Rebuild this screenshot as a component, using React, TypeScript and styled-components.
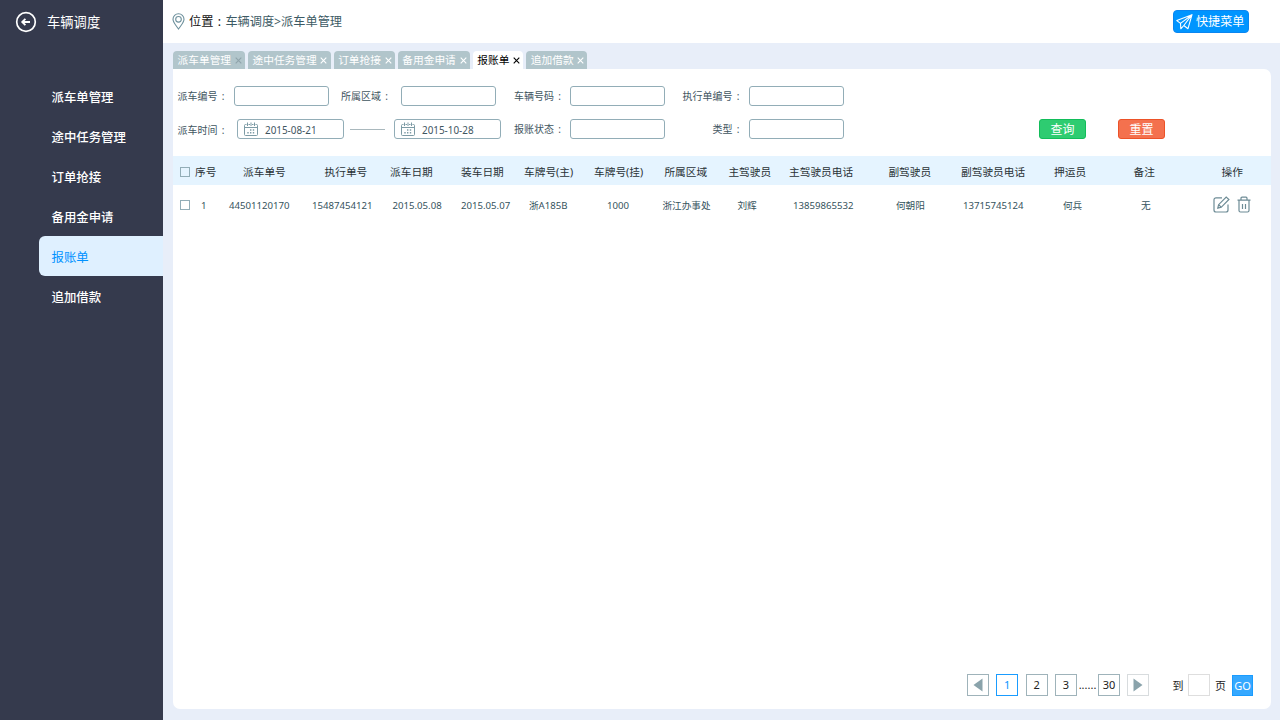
import React, { useState } from 'react';
import styled, { createGlobalStyle } from 'styled-components';

const GlobalStyle = createGlobalStyle`
  * {
    box-sizing: border-box;
  }

  body {
    margin: 0;
    overflow: hidden;
    font-family: "Noto Sans", "Noto Sans CJK SC", sans-serif;
  }

  button, input {
    font-family: inherit;
  }
`;

const Page = styled.div`
  display: flex;
  width: 1280px;
  height: 720px;
  background: #e8eef9;
`;

/* Sidebar */

const Sidebar = styled.aside`
  display: flex;
  flex-direction: column;
  flex: none;
  width: 163px;
  background: #353a4d;
`;

const SidebarHeader = styled.div`
  display: flex;
  align-items: center;
  gap: 10px;
  height: 44px;
  padding-left: 15px;
  color: #fff;
  font-size: 13.3px;
  line-height: 19px;
`;

const Menu = styled.ul`
  margin: 32px 0 0;
  padding: 0 0 0 39px;
  list-style: none;
`;

const MenuItem = styled.li<{ $active: boolean }>`
  height: 40px;
  padding: 1px 0 0 12.5px;
  border-radius: 6px 0 0 6px;
  background: ${({ $active }) => ($active ? '#dff0ff' : 'transparent')};
  color: ${({ $active }) => ($active ? '#0092ff' : '#fff')};
  font-size: 12.4px;
  font-weight: ${({ $active }) => ($active ? 400 : 500)};
  line-height: 41px;
  cursor: pointer;
`;

/* Top bar */

const Main = styled.main`
  display: flex;
  flex-direction: column;
  flex: 1;
  min-width: 0;
`;

const TopBar = styled.header`
  display: flex;
  align-items: center;
  justify-content: space-between;
  height: 43px;
  padding: 0 31px 0 9px;
  background: #fff;
`;

const Location = styled.div`
  display: flex;
  align-items: center;
  color: #111;
  font-size: 12.2px;
  line-height: 20px;

  svg {
    margin-right: 4px;
  }
`;

const Colon = styled.span`
  width: 12px;
  text-align: center;
`;

const Crumbs = styled.span`
  color: #3c5a64;
`;

const QuickMenu = styled.button`
  display: flex;
  align-items: center;
  gap: 3px;
  width: 76px;
  height: 23px;
  padding: 0 0 0 2px;
  border: 1px solid #0a86f0;
  border-radius: 4px;
  background: #0095ff;
  color: #fff;
  font-size: 12.1px;
  line-height: 20px;
  white-space: nowrap;
`;

/* Tabs */

const TabBar = styled.nav`
  display: flex;
  align-items: flex-end;
  gap: 3px;
  height: 26px;
  padding-left: 10px;
`;

const Tab = styled.div<{ $active: boolean }>`
  display: flex;
  align-items: center;
  height: 18px;
  padding: 0 3.2px 0 4.6px;
  border-radius: 4px 4px 0 0;
  background: ${({ $active }) => ($active ? '#fff' : '#b1c5cb')};
  color: ${({ $active }) => ($active ? '#000' : '#fff')};
  font-size: 10.7px;
  line-height: 18px;
  white-space: nowrap;
  cursor: pointer;
`;

const TabClose = styled.span<{ $muted: boolean }>`
  display: flex;
  margin-left: 3.7px;
  padding-top: 1px;
  color: ${({ $muted }) => ($muted ? '#8fa3aa' : 'inherit')};
`;

const Panel = styled.section`
  display: flex;
  flex-direction: column;
  flex: 1;
  margin: 0 9px 11px 10px;
  border-radius: 0 7px 7px 7px;
  background: #fff;
`;

/* Filters */

const Filters = styled.div`
  display: flex;
  flex-direction: column;
  gap: 13px;
  height: 87px;
  padding: 17px 0 0 4.5px;
`;

const FilterRow = styled.div`
  display: flex;
  align-items: center;
  height: 20px;
`;

const Label = styled.label<{ $width: number; $gap?: number; $drop?: number }>`
  display: flex;
  flex: none;
  width: ${({ $width }) => $width}px;
  margin-left: ${({ $gap = 0 }) => $gap}px;
  padding-top: ${({ $drop = 0 }) => $drop}px;
  color: #3f565f;
  font-size: 10px;
  line-height: 20px;
  white-space: nowrap;

  span {
    width: 11px;
    text-align: center;
  }
`;

const TextInput = styled.input`
  width: 95px;
  height: 20px;
  padding: 0 6px;
  border: 1px solid #92adb7;
  border-radius: 3px;
  background: #fff;
  font-size: 10px;
  outline: none;
`;

const DateInput = styled.div`
  display: flex;
  align-items: center;
  gap: 7px;
  width: 107px;
  height: 20px;
  padding-left: 6px;
  border: 1px solid #92adb7;
  border-radius: 3px;
  color: #3f565f;
`;

const DateText = styled.span`
  padding-top: 2px;
  font-size: 9.9px;
  line-height: 18px;
`;

const RangeLine = styled.span`
  width: 35px;
  height: 1px;
  margin: 0 9px 0 6px;
  background: #a9b8bd;
`;

const ActionButton = styled.button<{ $color: string; $border: string; $gap: number }>`
  width: 47px;
  height: 20px;
  margin-left: ${({ $gap }) => $gap}px;
  padding: 1px 0 0;
  border: 1px solid ${({ $border }) => $border};
  border-radius: 3px;
  background: ${({ $color }) => $color};
  color: #fff;
  font-size: 12px;
  line-height: 18px;
`;

/* Table */

const Row = styled.div<{ $head?: boolean }>`
  display: grid;
  grid-template-columns: 22px 34px 83px 78px 71px 63px 70px 68px 66px 61px 99px 73px 93px 79px 80px 58px;
  align-items: center;
  height: ${({ $head }) => ($head ? 29 : 40)}px;
  padding-top: ${({ $head }) => ($head ? 2 : 0)}px;
  background: ${({ $head }) => ($head ? '#e5f4ff' : 'transparent')};
  color: ${({ $head }) => ($head ? '#2a3236' : '#35535d')};
  font-size: ${({ $head }) => ($head ? 10.7 : 9.65)}px;
  line-height: 20px;
`;

const Cell = styled.div<{ $indent: number }>`
  padding: 1px 0 0 ${({ $indent }) => $indent}px;
  white-space: nowrap;
`;

const Operations = styled.div`
  display: flex;
  gap: 7px;
  padding-bottom: 1px;
`;

const CheckBox = styled.span`
  width: 10px;
  height: 10px;
  margin-left: 7px;
  border: 1px solid #92adb7;
`;

/* Pagination */

const Pagination = styled.footer`
  display: flex;
  align-items: center;
  justify-content: flex-end;
  margin-top: auto;
  padding: 0 18px 13px 0;
  color: #222;
  font-size: 11px;
  line-height: 20px;
`;

const PageButton = styled.button<{ $active?: boolean; $pale?: boolean; $gap?: number }>`
  display: flex;
  align-items: center;
  justify-content: center;
  width: 22px;
  height: 22px;
  margin-left: ${({ $gap = 7.4 }) => $gap}px;
  padding: 0;
  border: 1px solid ${({ $active, $pale }) => ($active ? '#1a9cff' : $pale ? '#d8dcde' : '#9fb3ba')};
  background: #fff;
  color: ${({ $active }) => ($active ? '#0a95ff' : '#222')};
  font-size: 11px;
  line-height: 20px;
`;

const Dots = styled.span`
  width: 21px;
  text-align: center;
`;

const PageText = styled.span<{ $gap: number }>`
  width: 11px;
  margin-left: ${({ $gap }) => $gap}px;
  padding-top: 2px;
`;

const PageInput = styled.input`
  width: 22px;
  height: 22px;
  margin-left: 4.5px;
  padding: 0 3px;
  border: 1px solid #dedede;
  outline: none;
`;

const GoButton = styled.button`
  width: 21px;
  height: 21px;
  margin-left: 6px;
  padding: 0;
  border: 1px solid #1a9cff;
  background: #35a8ff;
  color: #fff;
  font-size: 11px;
  line-height: 19px;
`;

const BackIcon = () => (
  <svg width="22" height="22" viewBox="0 0 22 22" fill="none" stroke="#fff">
    <circle cx="11" cy="11" r="9.3" strokeWidth="1.7" />
    <path d="M15 11H7.5M10.4 7.8L7.2 11l3.2 3.2" strokeWidth="1.8" />
  </svg>
);

const PinIcon = () => (
  <svg width="13" height="17" viewBox="0 0 13 17" fill="none" stroke="#6d909c" strokeWidth="1.1">
    <path d="M6.5 16C4.2 12.6 1 9.4 1 6.3a5.5 5.5 0 0 1 11 0C12 9.4 8.8 12.6 6.5 16z" />
    <circle cx="6.5" cy="6.3" r="2.8" />
  </svg>
);

const PlaneIcon = () => (
  <svg width="17" height="16" viewBox="0 0 17 16" fill="none" stroke="#fff" strokeWidth="1.1" strokeLinejoin="round">
    <path d="M16 .7L.8 6.6l3.7 2.8L16 .7l-4 14-4.2-3.2L16 .7M4.5 9.4l.3 5.4 3-3.3" />
  </svg>
);

const CloseIcon = () => (
  <svg width="7" height="7" viewBox="0 0 7 7" stroke="currentColor" strokeWidth="1.1">
    <path d="M.7.7l5.6 5.6M6.3.7L.7 6.3" />
  </svg>
);

const CalendarIcon = () => (
  <svg width="14" height="14" viewBox="0 0 14 14" fill="none" stroke="#7d9ba5">
    <path d="M2.5 2.5h-1a1 1 0 0 0-1 1v9a1 1 0 0 0 1 1h11a1 1 0 0 0 1-1v-9a1 1 0 0 0-1-1h-1M4.5 2.5h1.5M8 2.5h1.5M.5 5.5h13" />
    <path d="M3.5.5v3.5M7 .5v3.5M10.5.5v3.5" />
    <path d="M6 8h1.4M8.8 8h1.4M3.3 10.8h1.4M6 10.8h1.4M8.8 10.8h1.4" strokeWidth="1.4" />
  </svg>
);

const EditIcon = () => (
  <svg width="17" height="17" viewBox="0 0 17 17" fill="none" stroke="#6d8b95" strokeWidth="1.2">
    <path d="M9 1.8H3a2 2 0 0 0-2 2V14a2 2 0 0 0 2 2h10a2 2 0 0 0 2-2V8.5" />
    <path d="M4.8 12.2l.8-3.5L13.2 1l2.7 2.5-7.7 7.8zM5.8 8.8l2.4 2.4" />
  </svg>
);

const TrashIcon = () => (
  <svg width="14" height="17" viewBox="0 0 14 17" fill="none" stroke="#6d8b95" strokeWidth="1.2">
    <path d="M.5 4.2h13M4 4V2.2a1 1 0 0 1 1-1h4a1 1 0 0 1 1 1V4M2 4.5v10A1.5 1.5 0 0 0 3.5 16h7a1.5 1.5 0 0 0 1.5-1.5v-10" />
    <path d="M5.5 8v5M8.5 8v5" />
  </svg>
);

const Arrow = ({ left }: { left?: boolean }) => (
  <svg width="10" height="14" viewBox="0 0 10 14" fill="#8aa3ab">
    <path d={left ? 'M9.5.5v13L.5 7z' : 'M.5.5v13l9-6.5z'} />
  </svg>
);

const menuItems = ['派车单管理', '途中任务管理', '订单抢接', '备用金申请', '报账单', '追加借款'];

type Column = {
  title: string;
  value: string;
  headIndent: number;
  cellIndent: number;
}

const columns: Column[] = [
  { title: '序号', value: '1', headIndent: 0, cellIndent: 6 },
  { title: '派车单号', value: '44501120170', headIndent: 14, cellIndent: 0 },
  { title: '执行单号', value: '15487454121', headIndent: 12.5, cellIndent: 0 },
  { title: '派车日期', value: '2015.05.08', headIndent: 0, cellIndent: 2.5 },
  { title: '装车日期', value: '2015.05.07', headIndent: 0, cellIndent: 0 },
  { title: '车牌号(主)', value: '浙A185B', headIndent: 0, cellIndent: 5 },
  { title: '车牌号(挂)', value: '1000', headIndent: 0, cellIndent: 13 },
  { title: '所属区域', value: '浙江办事处', headIndent: 2.4, cellIndent: 0.4 },
  { title: '主驾驶员', value: '刘辉', headIndent: 0.4, cellIndent: 9.5 },
  { title: '主驾驶员电话', value: '13859865532', headIndent: 0, cellIndent: 4 },
  { title: '副驾驶员', value: '何朝阳', headIndent: 0.4, cellIndent: 8 },
  { title: '副驾驶员电话', value: '13715745124', headIndent: 0, cellIndent: 2 },
  { title: '押运员', value: '何兵', headIndent: 0, cellIndent: 9 },
  { title: '备注', value: '无', headIndent: 0.5, cellIndent: 8 },
];

const App = () => {
  const [active, setActive] = useState('报账单');

  return (
    <Page>
      <GlobalStyle />
      <Sidebar>
        <SidebarHeader>
          <BackIcon />
          车辆调度
        </SidebarHeader>
        <Menu>
          {menuItems.map((item) => (
            <MenuItem key={item} $active={item === active} onClick={() => setActive(item)}>{item}</MenuItem>
          ))}
        </Menu>
      </Sidebar>
      <Main>
        <TopBar>
          <Location>
            <PinIcon />
            位置<Colon>:</Colon>
            <Crumbs>车辆调度&gt;派车单管理</Crumbs>
          </Location>
          <QuickMenu>
            <PlaneIcon />
            快捷菜单
          </QuickMenu>
        </TopBar>
        <TabBar>
          {menuItems.map((item, index) => (
            <Tab key={item} $active={item === active} onClick={() => setActive(item)}>
              {item}
              <TabClose $muted={index === 0}><CloseIcon /></TabClose>
            </Tab>
          ))}
        </TabBar>
        <Panel>
          <Filters>
            <FilterRow>
              <Label $width={56.5}>派车编号<span>:</span></Label>
              <TextInput />
              <Label $width={60} $gap={12}>所属区域<span>:</span></Label>
              <TextInput />
              <Label $width={56} $gap={18}>车辆号码<span>:</span></Label>
              <TextInput />
              <Label $width={66} $gap={17.5}>执行单编号<span>:</span></Label>
              <TextInput />
            </FilterRow>
            <FilterRow>
              <Label $width={59.5} $drop={2}>派车时间<span>:</span></Label>
              <DateInput><CalendarIcon /><DateText>2015-08-21</DateText></DateInput>
              <RangeLine />
              <DateInput><CalendarIcon /><DateText>2015-10-28</DateText></DateInput>
              <Label $width={56} $gap={13}>报账状态<span>:</span></Label>
              <TextInput />
              <Label $width={36} $gap={47.5}>类型<span>:</span></Label>
              <TextInput />
              <ActionButton $color="#2ecc71" $border="#12bd5a" $gap={195.5}>查询</ActionButton>
              <ActionButton $color="#f4714e" $border="#ec5228" $gap={32}>重置</ActionButton>
            </FilterRow>
          </Filters>
          <Row $head>
            <CheckBox />
            {columns.map((col) => (
              <Cell key={col.title} $indent={col.headIndent}>{col.title}</Cell>
            ))}
            <Cell $indent={8.5}>操作</Cell>
          </Row>
          <Row>
            <CheckBox />
            {columns.map((col) => (
              <Cell key={col.title} $indent={col.cellIndent}>{col.value}</Cell>
            ))}
            <Operations>
              <EditIcon />
              <TrashIcon />
            </Operations>
          </Row>
          <Pagination>
            <PageButton><Arrow left /></PageButton>
            <PageButton $active>1</PageButton>
            <PageButton>2</PageButton>
            <PageButton>3</PageButton>
            <Dots>......</Dots>
            <PageButton $gap={0}>30</PageButton>
            <PageButton $pale $gap={7}><Arrow /></PageButton>
            <PageText $gap={23.5}>到</PageText>
            <PageInput />
            <PageText $gap={5}>页</PageText>
            <GoButton>GO</GoButton>
          </Pagination>
        </Panel>
      </Main>
    </Page>
  );
};

export default App;
